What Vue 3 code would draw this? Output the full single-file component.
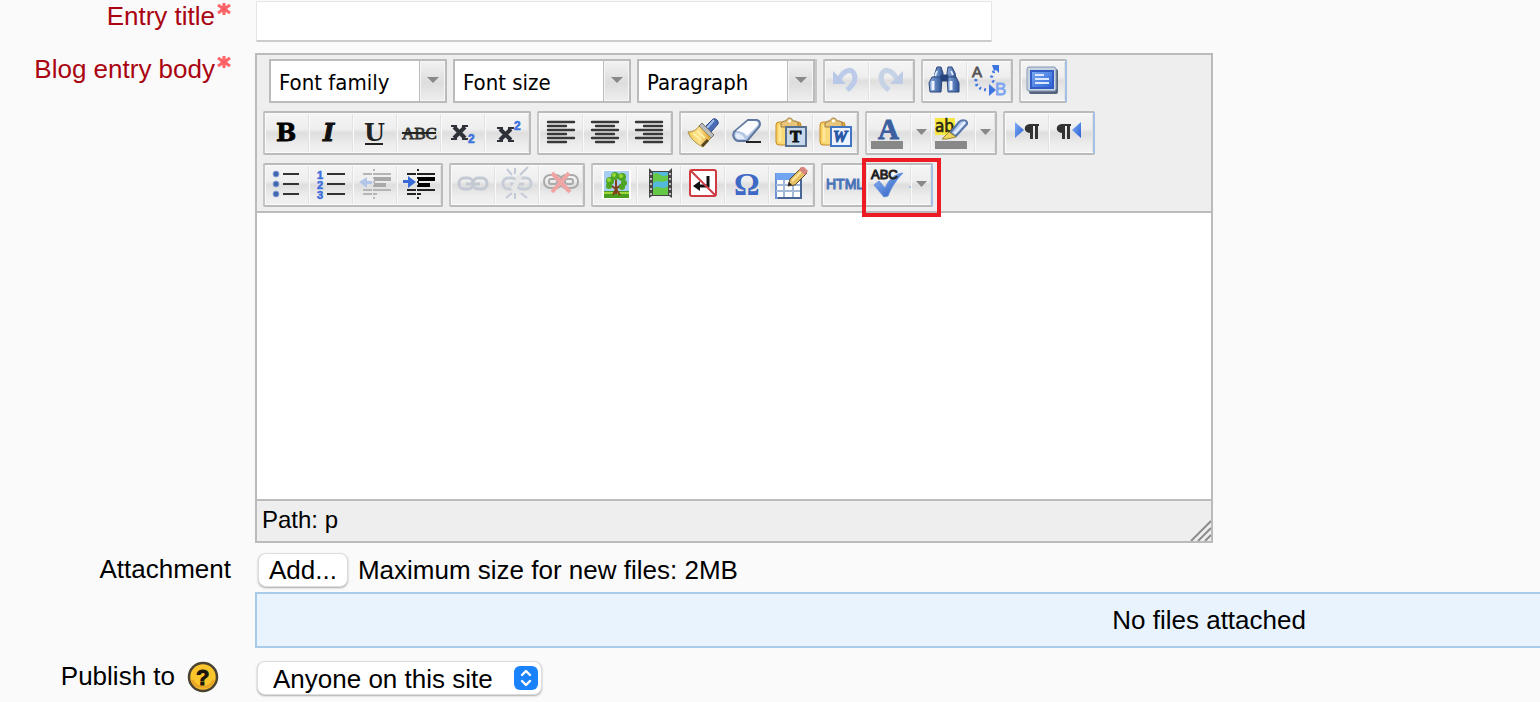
<script setup>
import { ref } from 'vue'

const title = ref('')
const publishTo = ref('all')

// Toolbar artwork, each drawn in a 44 x 40 box.
const chain = (c) =>
  `<g fill="none" stroke="${c}" stroke-width="3"><rect x="8" y="13" width="14" height="11" rx="5"/><rect x="22" y="13" width="14" height="11" rx="5"/><path d="M15 19H29"/></g>`
const dent = (c, thick, arrow) =>
  `<path d="M21 4v31" stroke="${c}" stroke-width="2" stroke-dasharray="2 2"/>
   <path d="M10 9h9M21 9h17M10 25h9M21 25h17M10 29h9M21 29h3" stroke="${c}" stroke-width="2"/>
   <path d="M21 14h17M21 20h12" stroke="${thick}" stroke-width="4"/>${arrow}`
const lines = (d) => `<path d="${d}" stroke="#383838" stroke-width="2.4" stroke-linecap="round"/>`
const clipboard = `<rect x="7" y="9" width="25" height="23" rx="3" fill="url(#gold)" stroke="#c68a28"/>
   <path d="M11 12v17" stroke="#ffe79a" stroke-width="3"/>
   <path d="M12 14v-4l3-2h2c1-4 6-4 7 0h3l2 2v4z" fill="#e8c478" stroke="#9c7a3c"/><circle cx="20.500" cy="8" r="1.500" fill="#fff"/>`

const art = {
  undo: `<path d="M14 19C17 11 24 7 28 11c4 5 2 12-6 18" fill="none" stroke="#bccbe9" stroke-width="5"/><path d="M8 10v13h13z" fill="#b7c7e8"/>`,
  redo: `<path d="M28 19C25 11 18 7 14 11c-4 5-2 12 6 18" fill="none" stroke="#c6d2e6" stroke-width="5"/><path d="M34 10v13H21z" fill="#bdcbe4"/>`,
  search: `<g stroke="#2c4678" stroke-width="1"><path d="M12 12l2-6h4l2 6v6h-9z" fill="url(#steel)"/><path d="M24 12l1-6h4l3 6 1 6h-9z" fill="url(#steel)"/>
   <path d="M9 16h10l-1 15H7l-1-9z" fill="url(#steel)"/><path d="M24 16h9l3 6v9H25z" fill="url(#steel)"/><rect x="18" y="14" width="7" height="6" fill="#24437c"/></g>
   <path d="M10 20v9M28 20v9" stroke="#eef4ff" stroke-width="3"/><path d="M14 10l-2 5M28 10l2 4" stroke="#dce8fa" stroke-width="2"/>`,
  replace: `<text x="5" y="16" font-size="15" class="sans" fill="#555" stroke="#555" stroke-width=".8">A</text><text x="28" y="34" font-size="17" class="sans" fill="#7fa6f0" stroke="#7fa6f0" stroke-width=".8">B</text>
   <path d="M9 18c-1 8 4 11 15 11M27 21c-4-3-2-9 1-12" fill="none" stroke="#3e74e0" stroke-width="3" stroke-dasharray="2 3"/>
   <path d="M25 4h7v8l-3-3-2 1zM22 23l7 6-7 6z" fill="#3e74e0"/>`,
  full: `<rect x="8" y="8" width="29" height="25" rx="2" fill="#56657e"/><rect x="6" y="6" width="29" height="24" rx="2" fill="#c8d4e4" stroke="#8797b2"/>
   <rect x="10" y="10" width="22" height="17" fill="url(#screen)" stroke="#315cc4" stroke-width="2"/><path d="M14 14h9M14 18h14M14 22h14" stroke="#dbe8ff" stroke-width="2"/>`,
  bold: `<text x="11" y="28" font-size="24" font-weight="bold" class="serif" stroke="#000" stroke-width=".8">B</text>`,
  italic: `<text x="14" y="28" font-size="24" font-weight="bold" font-style="italic" class="serif" fill="#111" stroke="#111">I</text>`,
  underline: `<text x="11" y="28" font-size="24" font-weight="bold" class="serif" fill="#222">U</text><path d="M12 31h18" stroke="#222" stroke-width="2"/>`,
  strike: `<text x="5" y="26" font-size="17" class="tight" fill="#333" stroke="#333" stroke-width=".8">ABC</text><path d="M5 20h34" stroke="#222" stroke-width="2"/>`,
  sub: `<path d="M13 14l11 11M24 14L13 25" stroke="#2e3138" stroke-width="4"/><path d="M10 13h6M21 13h6M10 26h6M21 26h6" stroke="#2e3138" stroke-width="2"/><text x="27" y="30" font-size="12" font-weight="bold" class="sans" fill="#3f73dc" stroke="#3f73dc" stroke-width=".6">2</text>`,
  sup: `<path d="M15 16l11 11M26 16L15 27" stroke="#2e3138" stroke-width="4"/><path d="M12 15h6M23 15h6M12 28h6M23 28h6" stroke="#2e3138" stroke-width="2"/><text x="29" y="17" font-size="12" font-weight="bold" class="sans" fill="#3f73dc" stroke="#3f73dc" stroke-width=".6">2</text>`,
  left: lines('M9 9h26M9 13h18M9 17h26M9 21h18M9 25h26M9 29h18'),
  center: lines('M9 9h26M13 13h18M9 17h26M13 21h18M9 25h26M13 29h18'),
  right: lines('M9 9h26M17 13h18M9 17h26M17 21h18M9 25h26M17 29h18'),
  brush: `<path d="M24 14l8-8c3-1 6 2 5 5l-7 8z" fill="#4a6cb4" stroke="#2d4887"/><path d="M33 7l-7 8" stroke="#a4bdf0" stroke-width="2"/>
   <path d="M18 13l3-3 12 12-3 3z" fill="#b9bcbd" stroke="#77736a"/><path d="M7 19c5 0 8-2 11-6l12 12c-4 3-5 6-8 9C16 31 10 27 7 19z" fill="url(#gold)" stroke="#a88c40"/>
   <path d="M12 20l8 7M16 18l8 7" stroke="#fff0a8" stroke-width="2"/><path d="M21 33l6-6" stroke="#584620" stroke-width="3"/>`,
  eraser: `<path d="M23 7h9c3 1 4 4 2 7L22 28h-9c-4-1-6-5-4-9z" fill="#b4c6e2" stroke="#60789f" stroke-width="2"/><path d="M23 8h8c2 1 3 3 1 5L22 23c-2-3-6-5-11-5z" fill="#fafcff"/><path d="M11 20c4 0 7 2 9 6h-7c-3-1-3-4-2-6z" fill="#e3ecf8"/><path d="M21 29h15" stroke="#222" stroke-width="2"/>`,
  pasteText: clipboard + `<rect x="17" y="14" width="20" height="19" fill="#c8d9ee" stroke="#58708f" stroke-width="2"/><text x="21" y="29" font-size="17" font-weight="bold" class="serif-n" fill="#111" stroke="#111">T</text>`,
  pasteWord: clipboard + `<rect x="18" y="14" width="20" height="19" fill="#eef4ff" stroke="#4274c4" stroke-width="2"/><text x="20" y="29" font-size="16" font-weight="bold" font-style="italic" class="serif-n" fill="#2858a8" stroke="#2858a8">W</text>`,
  color: `<text x="11" y="26" font-size="29" font-weight="bold" class="serif-n" fill="#3c609f" stroke="#3c609f">A</text><rect x="4" y="28" width="32" height="8" fill="#888"/>`,
  highlight: `<rect x="4" y="5" width="20" height="17" fill="#f6e83e"/><text x="4" y="19" font-size="17" class="cond" fill="#2c2912" stroke="#2c2912" stroke-width=".6">ab</text>
   <path d="M19 20l9-11c3-3 9-2 8 2L25 23z" fill="#b8cdf0" stroke="#5574a9" stroke-width="2"/><path d="M34 9L23 21" stroke="#e6f0ff" stroke-width="2"/><path d="M18 19l7 5-9 2h-5z" fill="#f0d75a" stroke="#9d8638"/><rect x="4" y="28" width="32" height="8" fill="#888"/>`,
  ltr: `<path d="M10 9l9 8-9 8z" fill="url(#screen)"/><path d="M34 11H25c-7 0-7 9 0 9v6h3V13h2v13h3V13h1z" fill="#333"/>`,
  rtl: `<path d="M32 9l-9 8 9 8z" fill="url(#screen)"/><path d="M22 11H13c-7 0-7 9 0 9v6h3V13h2v13h3V13h1z" fill="#333"/>`,
  bullets: `<g fill="#4168ac" stroke="#89a5d8"><circle cx="11" cy="9" r="3"/><circle cx="11" cy="19" r="3"/><circle cx="11" cy="29" r="3"/></g><path d="M18 9h16M18 19h16M18 29h16" stroke="#333" stroke-width="2"/>`,
  numbers: `<g font-size="11" font-weight="bold" class="sans" fill="#3f70dc" stroke="#3f70dc" stroke-width=".6"><text x="8" y="14">1</text><text x="8" y="24">2</text><text x="8" y="34">3</text></g><path d="M18 9h18M18 19h18M18 29h18" stroke="#333" stroke-width="2"/>`,
  outdent: dent('#b5b5b5', '#a9a9a9', '<path d="M6 17l8-5v4h5v3h-5v4z" fill="#b2c5e9"/>'),
  indent: dent('#222', '#000', '<path d="M19 17l-8-6v4H6v3h5v5z" fill="#386bd5"/>'),
  link: chain('#c3c9d3'),
  unlink: chain('#c7cdd7') + `<path d="M18 25l7-14" stroke="#e7e7e7" stroke-width="5"/><path d="M20 3v6M12 4l5 6M33 2l-8 8M20 28v6M11 33l6-5M32 33l-6-5" stroke="#c3cbd8" stroke-width="2"/>`,
  nolink: `<g fill="none" stroke="#aaa" stroke-width="2"><rect x="5" y="10" width="18" height="13" rx="6"/><rect x="21" y="10" width="18" height="13" rx="6"/><rect x="10" y="14" width="8" height="5" rx="2"/><rect x="26" y="14" width="8" height="5" rx="2"/></g><path d="M13 8l18 19M30 8L13 27" stroke="#f0a4a4" stroke-width="4"/>`,
  image: `<rect x="9" y="5" width="29" height="29" fill="#fff"/><rect x="11" y="6" width="25" height="24" fill="#a6cdf2"/><rect x="11" y="26" width="25" height="7" fill="#4b9d20"/><path d="M11 28h25" stroke="#9fd83a" stroke-width="2"/>
   <path d="M20 30l3-6-7-5M23 24l7-6M23 29V15M23 24l4 6" fill="none" stroke="#80401c" stroke-width="2"/><g fill="#4da522"><circle cx="17" cy="16" r="4"/><circle cx="22" cy="11" r="4"/><circle cx="29" cy="12" r="4"/><circle cx="31" cy="18" r="3"/><circle cx="16" cy="21" r="3"/><circle cx="29" cy="22" r="3"/></g><g fill="#94d83a"><circle cx="21" cy="10" r="2"/><circle cx="28" cy="11" r="2"/><circle cx="16" cy="15" r="2"/></g>`,
  media: `<path d="M12 3l3 3h17l3-3v30l-3-2H15l-3 2z" fill="#454545"/><path d="M16 7h15v23H16z" fill="#54b9db"/><path d="M16 9c7-4 6 5 15 1v5c-6 4-9-1-15 3zM16 24c5-5 9 2 15-3v9H16z" fill="#65c947"/><path d="M14 8v22M33 8v22" stroke="#bbb" stroke-width="2" stroke-dasharray="2 3"/>`,
  nonbreaking: `<rect x="9" y="5" width="26" height="26" rx="2" fill="#fff" stroke="#cf3b40" stroke-width="2"/><path d="M27 11v10H17" fill="none" stroke="#111" stroke-width="3"/><path d="M12 21l7-5v10z" fill="#111"/><path d="M10 6l24 24" stroke="#cf3b40" stroke-width="2"/>`,
  charmap: `<text x="9" y="30" font-size="32" class="serif-n" font-weight="bold" fill="#3e69c5">Ω</text>`,
  table: `<rect x="7" y="9" width="25" height="24" fill="#fff" stroke="#6c93d4" stroke-width="2"/><rect x="7" y="8" width="25" height="7" fill="#70a3f0"/><path d="M7 20h25M7 26h25M15 15v18M24 15v18" stroke="#a3b9d8" stroke-width="2"/><path d="M32 12v21H9" fill="none" stroke="#496696" stroke-width="2"/>
   <path d="M19 21l2-7L32 3l6 5-12 12z" fill="#e5bf62" stroke="#554b37"/><path d="M30 5l2-3h3l4 4-3 4z" fill="#d98580"/><path d="M23 16l9-9" stroke="#ffe6a1" stroke-width="2"/><path d="M19 21l1-4 3 3z" fill="#222"/>`,
  html: `<text x="3" y="24" font-size="14" class="sans" fill="#4a73b8" stroke="#4a73b8">HTML</text>`,
  spell: `<path d="M7 20l5-4 6 7C22 14 28 9 36 8c-7 7-12 15-15 23l-4 1z" fill="url(#tick)" stroke="#6a92dc"/><text x="4" y="14" font-size="13" class="sans" fill="#222" stroke="#222">ABC</text><rect x="42" y="21" width="2" height="2" fill="#a9c2ee"/>`,
}

const b = (icon, label, menu = false) => ({ icon, label, menu })

const pickers = ['Font family', 'Font size', 'Paragraph']
const rows = [
  [
    [b('undo', 'Undo'), b('redo', 'Redo')],
    [b('search', 'Find'), b('replace', 'Find and replace')],
    [b('full', 'Full screen')],
  ],
  [
    [b('bold', 'Bold'), b('italic', 'Italic'), b('underline', 'Underline'), b('strike', 'Strikethrough'), b('sub', 'Subscript'), b('sup', 'Superscript')],
    [b('left', 'Align left'), b('center', 'Align center'), b('right', 'Align right')],
    [b('brush', 'Clean up code'), b('eraser', 'Remove formatting'), b('pasteText', 'Paste as plain text'), b('pasteWord', 'Paste from Word')],
    [b('color', 'Text color', true), b('highlight', 'Background color', true)],
    [b('ltr', 'Left to right'), b('rtl', 'Right to left')],
  ],
  [
    [b('bullets', 'Bulleted list'), b('numbers', 'Numbered list'), b('outdent', 'Outdent'), b('indent', 'Indent')],
    [b('link', 'Insert link'), b('unlink', 'Unlink'), b('nolink', 'Prevent automatic linking')],
    [b('image', 'Insert image'), b('media', 'Insert media'), b('nonbreaking', 'Nonbreaking space'), b('charmap', 'Special character'), b('table', 'Insert table')],
    [b('html', 'Edit HTML source'), b('spell', 'Toggle spellchecker', true)],
  ],
]
</script>

<template>
  <form class="page" @submit.prevent>
    <svg class="defs" width="0" height="0" aria-hidden="true">
      <defs>
        <linearGradient id="gold"><stop stop-color="#f6cf5c" /><stop offset=".5" stop-color="#fbe08a" /><stop offset="1" stop-color="#dba02e" /></linearGradient>
        <linearGradient id="steel"><stop stop-color="#8fb0e0" /><stop offset="1" stop-color="#2e5498" /></linearGradient>
        <linearGradient id="screen" x2="1" y2="1"><stop stop-color="#7eadf6" /><stop offset="1" stop-color="#2b60d4" /></linearGradient>
        <linearGradient id="tick" x2="1" y2="1"><stop stop-color="#8db5f5" /><stop offset="1" stop-color="#2458bd" /></linearGradient>
      </defs>
    </svg>

    <div class="row title-row">
      <label class="name required" for="title">Entry title<svg class="star" viewBox="0 0 14 14" aria-hidden="true"><path d="M7 1v12M1 3l12 8M13 3L1 11" /><circle cx="7" cy="7" r="2" /></svg></label>
      <input id="title" v-model="title" class="title" type="text" />
    </div>

    <div class="row body-row">
      <label class="name required" for="body">Blog entry body<svg class="star" viewBox="0 0 14 14" aria-hidden="true"><path d="M7 1v12M1 3l12 8M13 3L1 11" /><circle cx="7" cy="7" r="2" /></svg></label>
      <div class="editor">
        <div class="toolbar">
          <div v-for="(groups, r) in rows" :key="r" class="tools">
            <div v-if="r === 0" class="pickers">
              <span v-for="p in pickers" :key="p" class="picker">
                <select :aria-label="p"><option>{{ p }}</option></select>
                <span class="drop"><svg viewBox="0 0 12 6"><path d="M0 0h12L6 6z" /></svg></span>
              </span>
            </div>
            <div v-for="(group, g) in groups" :key="g" class="group" :class="{ end: g === groups.length - 1 }">
              <span v-for="t in group" :key="t.icon" class="tool">
                <button type="button" :aria-label="t.label" :disabled="['undo', 'redo', 'outdent', 'link', 'unlink', 'nolink'].includes(t.icon)">
                  <svg viewBox="0 0 44 40" v-html="art[t.icon]"></svg>
                </button>
                <button v-if="t.menu" type="button" class="more" :aria-label="t.label + ' options'">
                  <svg viewBox="0 0 20 40"><path d="M5 16h11l-5.500 6z" fill="#888" /></svg>
                </button>
                <span v-if="t.icon === 'spell'" class="marker"></span>
              </span>
            </div>
          </div>
        </div>
        <textarea id="body" class="content"></textarea>
        <div class="status">
          <span>Path: <a href="#">p</a></span>
          <svg class="grip" viewBox="0 0 22 22" aria-hidden="true"><path d="M2 22L22 2M9 22L22 9M16 22l6-6" /></svg>
        </div>
      </div>
    </div>

    <div class="row attach-row">
      <span class="name">Attachment</span>
      <div class="attach">
        <div class="add"><button type="button">Add...</button><span>Maximum size for new files: 2MB</span></div>
        <div class="files">No files attached</div>
      </div>
    </div>

    <div class="row publish-row">
      <span class="name publish-name">
        <label for="publish">Publish to</label>
        <button type="button" class="help" aria-label="Help with Publish to">
          <svg viewBox="0 0 32 32"><circle cx="16" cy="16" r="14" fill="#fbc62c" stroke="#4c4330" stroke-width="2.500" /><path d="M5 19a12 12 0 0 0 22 0" fill="none" stroke="#e9a526" stroke-width="3" /><text x="9" y="24" font-size="22" font-weight="bold" class="sans" fill="#19160c" stroke="#19160c">?</text></svg>
        </button>
      </span>
      <span class="publish">
        <select id="publish" v-model="publishTo"><option value="all">Anyone on this site</option></select>
        <svg class="stepper" viewBox="0 0 24 24" aria-hidden="true"><rect width="24" height="24" rx="6" fill="#1a82fb" /><path d="M8 9l4-4 4 4M8 15l4 4 4-4" fill="none" stroke="#fff" stroke-width="2.400" stroke-linecap="round" stroke-linejoin="round" /></svg>
      </span>
    </div>
  </form>
</template>

<style>
body {
  background: #fafafa;
}
</style>

<style scoped>
.page {
  overflow: hidden;
  padding-bottom: 7px;
  color: #000;
  font: 26px/30px "Liberation Sans", Arial, sans-serif;
}
.page * {
  box-sizing: border-box;
}
.defs {
  display: block;
}
.row {
  display: grid;
  grid-template-columns: 15% minmax(0, 1fr);
  column-gap: 24px;
  align-items: start;
}
.name {
  text-align: right;
}
.required {
  color: #a90410;
  display: flex;
  justify-content: flex-end;
}
.star {
  width: 14px;
  height: 14px;
  margin: 1px 0 0 2px;
  fill: #ff2028;
  stroke: #ff6468;
  stroke-width: 3;
}
.title-row > .name {
  padding-top: 1px;
}
.title {
  width: 736px;
  max-width: 100%;
  height: 41px;
  margin: 1px 0 0 1px;
  padding: 4px 8px;
  border: 1px solid #e6e6e6;
  border-bottom: 2px solid #ccc;
  background: #fff;
  font: inherit;
}
.body-row {
  margin-top: 11px;
}
.body-row > .name {
  padding-top: 1px;
}
.editor {
  width: 958px;
  max-width: 100%;
  border: 2px solid #bbb;
  background: #eee;
}
.toolbar {
  display: grid;
  gap: 8px;
  padding: 4px 6px;
  border-bottom: 2px solid #bbb;
}
.tools,
.pickers {
  display: flex;
  gap: 6px;
}
.pickers {
  padding-left: 6px;
  border-right: 2px solid #c8c8c8;
}
.picker {
  display: grid;
  width: 178px;
  height: 44px;
}
.picker > * {
  grid-area: 1 / 1;
}
.picker select {
  appearance: none;
  width: 100%;
  padding: 4px 30px 0 8px;
  border: 2px solid #bbb;
  border-radius: 0;
  background: #fff;
  color: #000;
  font: 22px/26px "DejaVu Sans Condensed", Tahoma, "DejaVu Sans", sans-serif;
}
.drop {
  justify-self: end;
  width: 28px;
  border: 2px solid #bbb;
  border-left-width: 1px;
  box-shadow: inset 0 0 0 1px #f5f5f5;
  background: linear-gradient(#f2f2f2, #ddd 55%, #eee);
  pointer-events: none;
  display: flex;
  justify-content: center;
  align-items: center;
}
.drop svg {
  width: 12px;
  height: 6px;
  margin-bottom: 3px;
  fill: #888;
}
.group {
  display: flex;
  height: 44px;
  border: 2px solid #bbb;
  border-left-color: #c6c6c6;
  border-radius: 2px;
  background: linear-gradient(#f5f5f5, #eee 40%, #dedede 50%, #eee 80%, #f2f2f2);
}
.group.end {
  border-right-color: #a5bfe5;
}
.tool {
  display: flex;
  position: relative;
}
.tool button {
  width: 44px;
  padding: 0;
  border: 0;
  background: none;
  box-shadow: inset 1px 1px #fafafa, inset 0 -1px #fafafa, inset -1px 0 #e2e2e2;
}
.tool svg {
  display: block;
  width: 100%;
  height: 40px;
}
.tool .more {
  width: 20px;
}
.marker {
  position: absolute;
  inset: -7px -10px -12px -5px;
  border: 4px solid #ed1c24;
  pointer-events: none;
}
.page :deep(.serif) {
  font-family: "DejaVu Serif", serif;
}
.page :deep(.serif-n),
.page :deep(.tight) {
  font-family: "Liberation Serif", serif;
}
.page :deep(.sans) {
  font-family: "Liberation Sans", sans-serif;
}
.page :deep(.cond) {
  font-family: "DejaVu Sans Condensed", sans-serif;
}
.content {
  display: block;
  width: 100%;
  height: 286px;
  padding: 16px;
  border: 0;
  background: #fff;
  font: inherit;
  resize: none;
}
.status {
  display: flex;
  justify-content: space-between;
  align-items: flex-end;
  height: 42px;
  padding-left: 5px;
  border-top: 2px solid #bbb;
  font-size: 24px;
  line-height: 38px;
}
.status span {
  align-self: flex-start;
}
.status a {
  color: inherit;
  text-decoration: none;
}
.grip {
  width: 22px;
  height: 22px;
  fill: none;
  stroke: #8c8c8c;
  stroke-width: 2;
}
.attach-row {
  margin-top: 10px;
}
.attach-row > .name {
  padding-top: 1px;
}
.add {
  display: flex;
  align-items: center;
  gap: 10px;
  padding-left: 3px;
}
.add button {
  height: 34px;
  padding: 0 10px;
  border: 1px solid #ddd;
  border-radius: 8px;
  background: #fff;
  box-shadow: 0 1px 2px #aaa;
  color: #000;
  font: inherit;
}
.files {
  width: 148.5%;
  margin-top: 5px;
  padding: 11px 0;
  border: 2px solid #a8cbea;
  background: #e8f3fe;
  text-align: center;
}
.publish-row {
  margin-top: 13px;
}
.publish-name {
  display: flex;
  justify-content: flex-end;
  gap: 12px;
  padding-right: 12px;
}
.help {
  width: 32px;
  height: 32px;
  padding: 0;
  border: 0;
  background: none;
}
.help svg {
  display: block;
}
.publish {
  display: grid;
  justify-self: start;
  align-items: center;
  margin-left: 2px;
}
.publish > * {
  grid-area: 1 / 1;
}
.publish select {
  appearance: none;
  height: 34px;
  padding: 1px 48px 0 15px;
  border: 1px solid #ddd;
  border-radius: 8px;
  background: #fff;
  box-shadow: 0 1px 2px #aaa;
  color: #000;
  font: inherit;
}
.stepper {
  justify-self: end;
  width: 24px;
  height: 24px;
  margin-right: 4px;
  pointer-events: none;
}
</style>
